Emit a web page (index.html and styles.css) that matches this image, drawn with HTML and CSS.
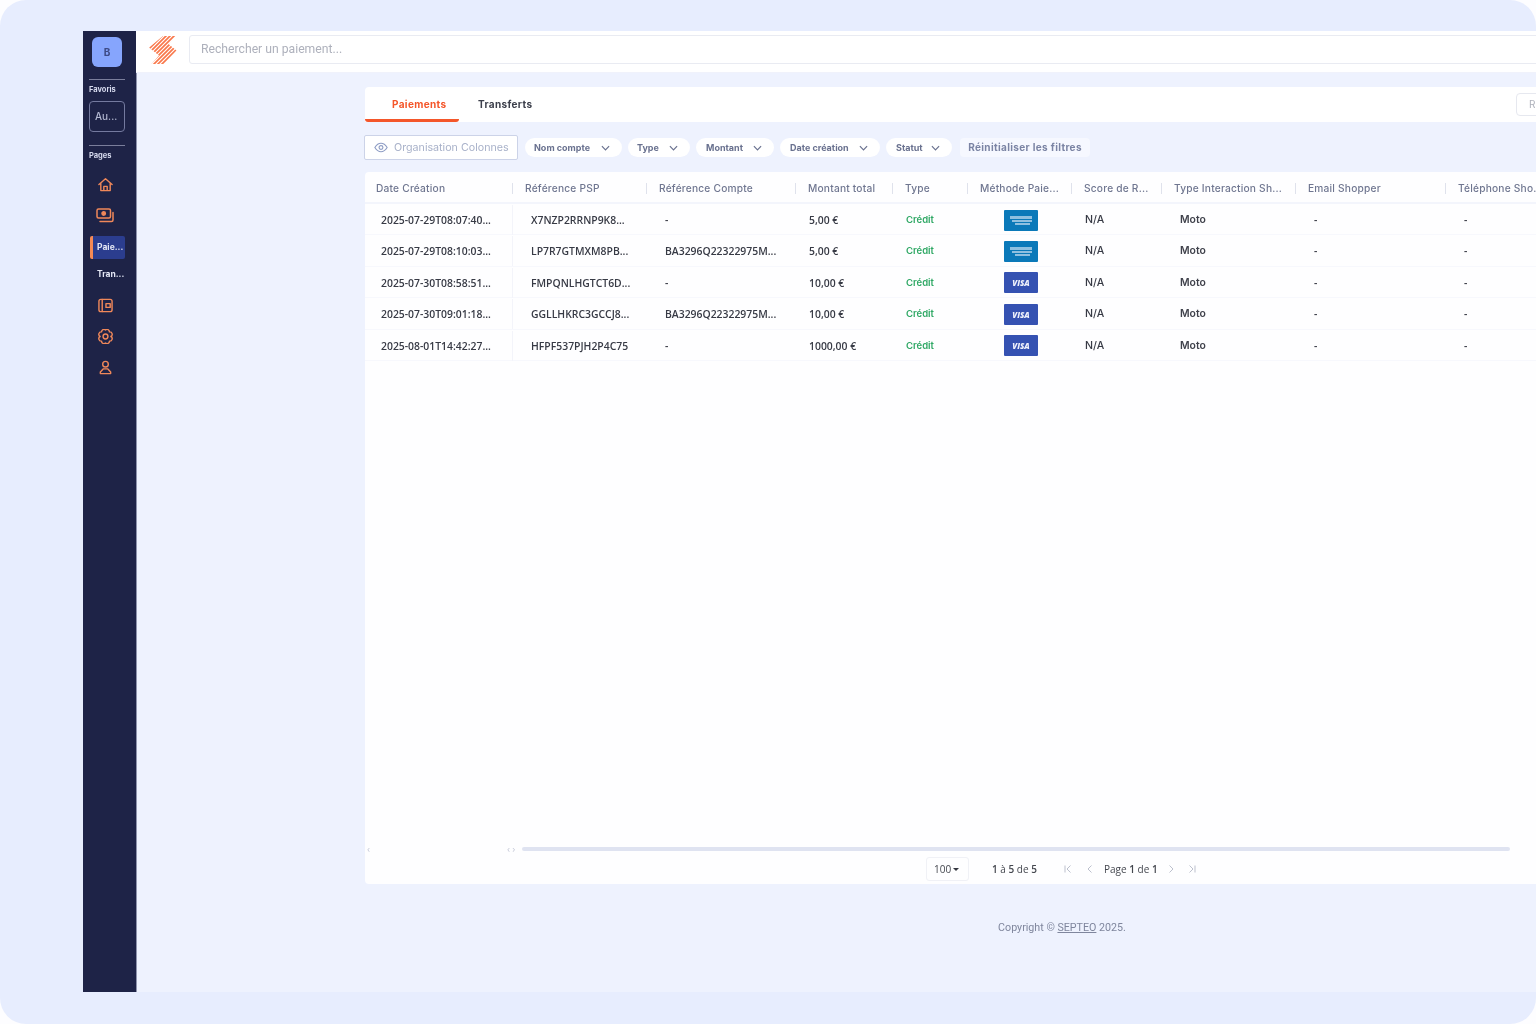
FILE: index.html
```html
<!DOCTYPE html>
<html lang="fr">
<head>
<meta charset="utf-8">
<title>Paiements</title>
<link rel="stylesheet" href="styles.css">
</head>
<body>
<div class="frame">
  <div class="app">
    <aside class="sidebar">
      <div class="avatar">B</div>
      <div class="rule"></div>
      <div class="side-label">Favoris</div>
      <div class="fav">Au...</div>
      <div class="rule rule-pages"></div>
      <div class="side-label">Pages</div>
      <nav class="nav">
        <a class="nav-icon"><svg viewBox="0 0 16 16"><path d="M1 8 8 1.800 15 8M3 6.500V14.500h10V6.500M6.200 14.500V10h3.600v4.500"/></svg></a>
        <a class="nav-icon"><svg class="wide" viewBox="0 0 18 15"><rect x="1" y="1" width="13.500" height="9" rx="1.500"/><circle cx="7.700" cy="5.500" r="1.700" class="solid"/><path d="M17 4.500v7.500a1.500 1.500 0 0 1-1.500 1.500H4"/></svg></a>
        <a class="nav-text active">Paie...</a>
        <a class="nav-text">Tran...</a>
        <a class="nav-icon"><svg viewBox="0 0 16 16"><rect x="1" y="1.500" width="14" height="13" rx="2"/><path d="M4.500 1.500v13M8.500 6h4.500v4H8.500z"/></svg></a>
        <a class="nav-icon"><svg viewBox="0 0 16 16"><path d="M8 1a2.600 2.600 0 0 1 4.200 2.100 2.600 2.600 0 0 1 1.500 4.900 2.600 2.600 0 0 1-1.500 4.900A2.600 2.600 0 0 1 8 15a2.600 2.600 0 0 1-4.200-2.100A2.600 2.600 0 0 1 2.300 8a2.600 2.600 0 0 1 1.500-4.900A2.600 2.600 0 0 1 8 1z"/><circle cx="8" cy="8" r="2.600"/></svg></a>
        <a class="nav-icon"><svg viewBox="0 0 16 16"><circle cx="8" cy="4.500" r="3"/><path d="M5.500 9.500h5l3 3.300v1.700h-11v-1.700z"/></svg></a>
      </nav>
    </aside>
    <div class="main">
      <header class="topbar">
        <svg class="logo" viewBox="0 0 28 30">
          <defs>
            <clipPath id="logo-shape"><path d="M14 1H27L19.500 9 27.500 15.500 15 29H2.500L10 20.500 0 12.500z"/></clipPath>
          </defs>
          <g clip-path="url(#logo-shape)" stroke="#f9784b" stroke-width="1.700">
            <path d="M-4 14 14-4M0 14 18-4M-4 22 22-4M-4 26 26-4M-4 30 30-4M-4 34 34-4M0 34 34 0M4 34 38 0M8 34 38 4M12 34 38 8M16 34 38 12M20 34 38 16M24 34 38 20"/>
          </g>
        </svg>
        <div class="search">Rechercher un paiement...</div>
      </header>
      <section class="content">
        <div class="tabs">
          <a class="tab tab-on">Paiements</a>
          <a class="tab">Transferts</a>
          <span class="tab-action">R</span>
        </div>
        <div class="filters">
          <button class="columns-btn"><svg viewBox="0 0 16 12"><path d="M1 6c2-3.200 4.300-4.800 7-4.800S13 2.800 15 6c-2 3.200-4.300 4.800-7 4.800S3 9.200 1 6z"/><circle cx="8" cy="6" r="2.200"/></svg>Organisation Colonnes</button>
          <span class="chip chip-nom">Nom compte<svg viewBox="0 0 10 6"><path d="M1 1l4 4 4-4"/></svg></span>
          <span class="chip chip-type">Type<svg viewBox="0 0 10 6"><path d="M1 1l4 4 4-4"/></svg></span>
          <span class="chip chip-montant">Montant<svg viewBox="0 0 10 6"><path d="M1 1l4 4 4-4"/></svg></span>
          <span class="chip chip-date">Date création<svg viewBox="0 0 10 6"><path d="M1 1l4 4 4-4"/></svg></span>
          <span class="chip chip-statut">Statut<svg viewBox="0 0 10 6"><path d="M1 1l4 4 4-4"/></svg></span>
          <span class="reset">Réinitialiser les filtres</span>
        </div>
        <div class="grid">
          <div class="row head">
            <span>Date Création</span><span>Référence PSP</span><span>Référence Compte</span><span>Montant total</span><span>Type</span><span>Méthode Paie...</span><span>Score de R...</span><span>Type Interaction Sh...</span><span>Email Shopper</span><span>Téléphone Sho...</span>
          </div>
          <div class="row data">
            <span class="date">2025-07-29T08:07:40...</span><span>X7NZP2RRNP9K8...</span><span>-</span><span class="amt">5,00 €</span><span class="credit">Crédit</span><span class="pay"><i class="card amex"><svg viewBox="0 0 34 21"><path d="M6 6h22v3H6zM8 10h20v2H8zM11 13h15v2H11z"/></svg></i></span><span class="score">N/A</span><span class="moto">Moto</span><span>-</span><span>-</span>
          </div>
          <div class="row data">
            <span class="date">2025-07-29T08:10:03...</span><span>LP7R7GTMXM8PB...</span><span>BA3296Q22322975M...</span><span class="amt">5,00 €</span><span class="credit">Crédit</span><span class="pay"><i class="card amex"><svg viewBox="0 0 34 21"><path d="M6 6h22v3H6zM8 10h20v2H8zM11 13h15v2H11z"/></svg></i></span><span class="score">N/A</span><span class="moto">Moto</span><span>-</span><span>-</span>
          </div>
          <div class="row data">
            <span class="date">2025-07-30T08:58:51...</span><span>FMPQNLHGTCT6D...</span><span>-</span><span class="amt">10,00 €</span><span class="credit">Crédit</span><span class="pay"><i class="card visa">VISA</i></span><span class="score">N/A</span><span class="moto">Moto</span><span>-</span><span>-</span>
          </div>
          <div class="row data">
            <span class="date">2025-07-30T09:01:18...</span><span>GGLLHKRC3GCCJ8...</span><span>BA3296Q22322975M...</span><span class="amt">10,00 €</span><span class="credit">Crédit</span><span class="pay"><i class="card visa">VISA</i></span><span class="score">N/A</span><span class="moto">Moto</span><span>-</span><span>-</span>
          </div>
          <div class="row data">
            <span class="date">2025-08-01T14:42:27...</span><span>HFPF537PJH2P4C75</span><span>-</span><span class="amt">1000,00 €</span><span class="credit">Crédit</span><span class="pay"><i class="card visa">VISA</i></span><span class="score">N/A</span><span class="moto">Moto</span><span>-</span><span>-</span>
          </div>
          <div class="grid-spacer"></div>
          <div class="hscroll">
            <span class="hs-left">‹</span><span class="hs-arrows">‹ ›</span><span class="hs-bar"></span>
          </div>
          <div class="pager">
            <span class="size">100<i class="caret"></i></span>
            <span class="count"><b>1</b> à <b>5</b> de <b>5</b></span>
            <svg class="pg-ico pg-first" viewBox="0 0 8 8"><path d="M1 .5v7M6.500 .5 3 4l3.500 3.500"/></svg>
            <svg class="pg-ico pg-prev" viewBox="0 0 8 8"><path d="M5.500 .5 2 4l3.500 3.500"/></svg>
            <span class="page">Page <b>1</b> de <b>1</b></span>
            <svg class="pg-ico pg-next" viewBox="0 0 8 8"><path d="M2.500 .5 6 4 2.500 7.500"/></svg>
            <svg class="pg-ico pg-last" viewBox="0 0 8 8"><path d="M1.500 .5 5 4 1.500 7.500M7 .5v7"/></svg>
          </div>
        </div>
        <footer class="copy">Copyright © <u>SEPTEO</u> 2025.</footer>
      </section>
    </div>
  </div>
</div>
</body>
</html>
```
FILE: styles.css
```css
* { box-sizing: border-box; }
html, body { margin: 0; height: 100%; overflow: hidden; background: #fdfdff; }
body { font-family: Inter, "Liberation Sans", sans-serif; }
.frame {
  width: 1536px; height: 1024px; background: #e7edfe; border-radius: 26px;
  padding: 31px 0 32px 83px; overflow: hidden;
}
.app { display: flex; width: 1906px; height: 961px; background: #eef2fe; filter: blur(.7px); }

.sidebar {
  width: 53px; flex: none; background: #1e2347; padding: 6px 0 0 6px;
  display: flex; flex-direction: column; box-shadow: 1px 0 0 #8e93ad;
}
.avatar {
  width: 30px; height: 30px; margin-left: 3px; border-radius: 6px; background: #86a5fd;
  color: #3d4a86; font-size: 10px; font-weight: 700; display: flex; align-items: center; justify-content: center;
}
.rule { width: 36px; height: 1px; background: #7a7e9b; margin-top: 12px; }
.rule-pages { margin-top: 13px; }
.side-label { color: #d6daee; font-size: 7.500px; font-weight: 700; margin-top: 5px; line-height: 9px; }
.fav {
  width: 36px; height: 31px; margin-top: 7px; border: 1px solid #747a9f; border-radius: 4px;
  color: #b4b9d2; font-size: 10px; line-height: 29px; padding-left: 5px; font-weight: 500;
}
.nav { display: flex; flex-direction: column; margin-top: 9px; }
.nav-icon { width: 32px; height: 31px; display: flex; align-items: center; justify-content: center; flex: none; }
.nav-icon svg { width: 15px; height: 15px; fill: none; stroke: #f0885a; stroke-width: 1.500; stroke-linejoin: round; stroke-linecap: round; }
.nav-icon svg.wide { width: 18px; }
.nav-icon .solid { fill: #f0885a; }
.nav-text {
  width: 36px; height: 31px; padding-left: 8px; color: #e4e7f5; font-size: 8.500px; font-weight: 700;
  line-height: 31px; flex: none; white-space: nowrap;
}
.nav-text.active {
  width: 35px; height: 23px; line-height: 22px; margin: 5px 0 0 1px; background: #2b3d8e;
  border-left: 3px solid #f58a55; border-radius: 2px; padding-left: 4px;
}

.main { flex: 1; display: flex; flex-direction: column; min-width: 0; }
.topbar { height: 42px; background: #fff; padding: 4px 0 0 13px; display: flex; align-items: flex-start; gap: 12px; flex: none; border-bottom: 1px solid #f0f2fb; }
.logo { width: 28px; height: 30px; flex: none; }
.search {
  flex: 1; height: 29px; border: 1px solid #e9ebf2; border-radius: 3px; background: #fff;
  color: #aeb1bc; font-size: 12.200px; line-height: 26px; padding-left: 11px; font-family: Roboto, sans-serif;
}
.content { width: 1394px; margin: 14px 0 0 229px; }

.tabs { height: 35px; background: #fff; border-radius: 4px 4px 0 0; display: flex; align-items: stretch; position: relative; }
.tab { font-size: 10px; font-weight: 700; color: #3d404c; line-height: 34px; letter-spacing: .35px; padding-left: 19px; }
.tab-on { width: 94px; padding-left: 27px; color: #f4562a; border-bottom: 3px solid #f4562a; border-radius: 0 0 3px 3px; }
.tab-action {
  position: absolute; left: 1151px; top: 6px; width: 40px; height: 23px; border: 1px solid #e6e8ef; border-radius: 4px;
  color: #aeb1bb; font-size: 10px; line-height: 21px; padding-left: 12px;
}

.filters { display: flex; align-items: center; height: 25px; margin: 13px 0 12px -1px; }
.columns-btn {
  width: 154px; height: 25px; border: 1px solid #ccd3e8; border-radius: 2px; background: #fff; padding: 0 0 0 9px;
  color: #a8b1c9; font: 400 10.700px Inter, sans-serif; display: flex; align-items: center; gap: 6px; white-space: nowrap; margin-right: 7px;
}
.columns-btn svg { width: 14px; height: 11px; fill: none; stroke: #8d9cc4; stroke-width: 1.300; }
.chip {
  height: 19px; background: #fff; border-radius: 10px; color: #69718f; font-size: 9px; font-weight: 700;
  display: flex; align-items: center; justify-content: space-between; padding: 0 12px 0 9px; margin-right: 6px; white-space: nowrap;
}
.chip svg { width: 9px; height: 6px; fill: none; stroke: #69718f; stroke-width: 1.300; }
.chip-nom { width: 97px; }
.chip-type { width: 62px; }
.chip-montant { width: 78px; padding-left: 10px; }
.chip-date { width: 100px; padding-left: 10px; }
.chip-statut { width: 66px; padding-left: 10px; }
.reset {
  height: 19px; width: 130px; margin-left: 2px; background: #f6f8ff; border-radius: 4px; color: #7b84a4; font-size: 10px; font-weight: 700;
  line-height: 19px; text-align: center; white-space: nowrap; letter-spacing: .35px;
}

.grid { height: 712px; background: #fefeff; border-radius: 4px; display: flex; flex-direction: column; overflow: hidden; }
.row { display: grid; grid-template-columns: 147px 134px 149px 97px 75px 104px 90px 134px 150px 200px; flex: none; align-items: center; }
.row > span { white-space: nowrap; }
.head { height: 32px; border-bottom: 2px solid #f3f5fc; color: #6f7690; font-size: 10.200px; font-weight: 500; letter-spacing: .2px; padding-top: 3px; }
.head > span { padding-left: 12px; border-left: 1px solid #dfe2ec; line-height: 11px; }
.head > span:first-child { padding-left: 11px; border-left: 0; }
.data {
  height: 31.400px; padding-top: 1px; border-bottom: 1px solid #f7f8fd; color: #373a45; font: 600 10.400px "Open Sans", sans-serif;
}
.data > span { padding-left: 19px; line-height: 30px; }
.data > .date { padding-left: 16px; box-shadow: 1px 0 0 #f3f4fa; }
.data > .date + span { padding-left: 19px; }
.data > .amt { padding-left: 14px; }
.data > .credit { padding-left: 14px; color: #2fa865; font-family: Inter, sans-serif; font-size: 9.500px; }
.data > .pay { padding-left: 37px; display: flex; align-items: center; height: 30px; }
.data > .score { padding-left: 14px; font-family: Inter, sans-serif; font-weight: 500; font-size: 10.600px; }
.data > .moto { font-family: Inter, sans-serif; font-size: 10.400px; color: #3f414b; }
.card { display: block; width: 34px; height: 21px; border-radius: 1px; font-style: normal; }
.card svg { display: block; width: 34px; height: 21px; fill: #8fc0e0; }
.amex { background: #0b79b9; }
.visa { background: #3552b2; color: #eef1fb; font: italic 800 8px/21px "Open Sans", sans-serif; text-align: center; }

.grid-spacer { flex: 1; }
.hscroll { height: 6px; display: flex; align-items: center; flex: none; margin-bottom: 4px; color: #c2c6d6; font-size: 8px; }
.hs-left { margin-left: 2px; width: 140px; }
.hs-arrows { width: 15px; }
.hs-bar { width: 988px; height: 4px; background: #dfe3f1; border-radius: 2px; }
.pager { height: 28px; flex: none; display: flex; align-items: center; color: #44474f; font: 400 10px "Open Sans", sans-serif; padding-left: 561px; padding-bottom: 2px; }
.pager b { font-weight: 600; }
.size { width: 43px; height: 24px; border: 1px solid #f0f1f6; border-radius: 3px; padding-left: 7px; line-height: 22px; display: block; }
.caret { display: inline-block; margin-left: 2px; vertical-align: 2px; border: 3.500px solid transparent; border-top-color: #33363f; border-bottom: 0; }
.count { margin-left: 23px; width: 70px; }
.pg-ico { width: 8px; height: 8px; fill: none; stroke: #bcc0cd; stroke-width: 1; flex: none; }
.pg-first { margin-left: 2px; }
.pg-prev { margin-left: 14px; }
.page { margin-left: 10px; width: 63px; white-space: nowrap; }
.pg-next { margin-left: 0; }
.pg-last { margin-left: 13px; }
.copy { margin-top: 37px; text-align: center; color: #7f869d; font: 400 10.700px/14px Roboto, sans-serif; }
```
